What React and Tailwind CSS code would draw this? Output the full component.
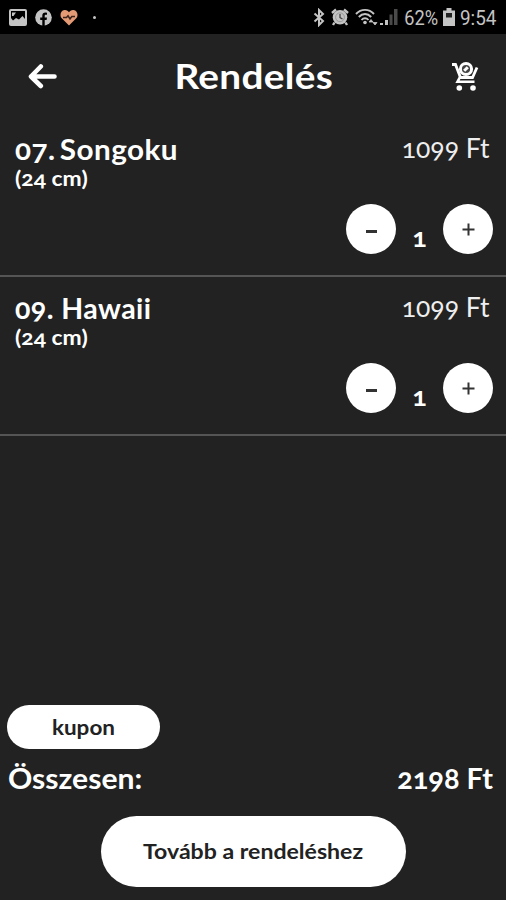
import React from "react";

const items = [
  { id: 1, name: "07. Songoku", size: "(24 cm)", price: "1099 Ft", count: 1, nameStyle: "scale-x-[1.06] [word-spacing:-3px]" },
  { id: 2, name: "09. Hawaii", size: "(24 cm)", price: "1099 Ft", count: 1, nameStyle: "scale-x-[1.02]" },
];

function StatusBar() {
  return (
    <div className="h-[34px] shrink-0 bg-black flex items-center justify-between pl-[9px] pr-[10px] text-[#c4c4c4] lining-nums">
      <div className="flex items-center">
        {/* Picture */}
        <svg className="w-[18px] h-[17px]" viewBox="0 0 18 17" fill="none">
          <rect x="1" y="1" width="16" height="15" rx="1" stroke="currentColor" strokeWidth="2" />
          <path d="M2 15V9L4 11.500L7 9L10 10.500L13.500 7L16 10V15Z" fill="currentColor" />
          <path d="M3 3.500H7L4.500 7H3Z" fill="currentColor" />
        </svg>
        {/* Facebook */}
        <svg className="w-[17px] h-[17px] ml-2" viewBox="0 0 17 17">
          <circle cx="8.500" cy="8.500" r="8.300" fill="currentColor" />
          <path d="M7.300 17V11H5.200V8.500H7.300V6.800C7.300 4.600 8.500 3.500 10.500 3.500L12 3.700V5.700H11C10 5.700 9.700 6.200 9.700 7V8.500H12L11.600 11H9.700V17Z" fill="#000" />
        </svg>
        {/* Heart rate */}
        <svg className="w-[18px] h-[17px] ml-2" viewBox="0 0 18 17">
          <path d="M9 16.500L1.500 9C-.5 6.500 .5 1.500 4.500 1C6.700 .8 8.200 2 9 3.200C9.800 2 11.300 .8 13.500 1C17.500 1.500 18.500 6.500 16.500 9Z" fill="#e59a76" />
          <path d="M3 8.500H6.500L8 6.800L10 10L11.800 7.500H15" fill="none" stroke="#3b241c" strokeWidth="1.500" />
        </svg>
        <span className="w-[3px] h-[3px] ml-[15px] rounded-full bg-current" />
      </div>

      <div className="flex items-center">
        {/* Bluetooth */}
        <svg className="w-[12px] h-[19px]" viewBox="0 0 12 19" fill="none" stroke="currentColor" strokeWidth="2">
          <path d="M1.500 5.500L10 13L6 17V2L10 6L1.500 13.500" />
        </svg>
        {/* Alarm */}
        <svg className="w-[18px] h-[18px] ml-[6px]" viewBox="0 0 18 18">
          <circle cx="9" cy="9.300" r="7.300" fill="currentColor" />
          <path d="M1 5L5 1.500M17 5L13 1.500M3.500 14.500L2 17M14.500 14.500L16 17" stroke="currentColor" strokeWidth="2.400" />
          <circle cx="9" cy="9.300" r="4.400" fill="none" stroke="#999" strokeWidth="1" />
          <path d="M9 6V9.700L11.500 11" fill="none" stroke="#444" strokeWidth="1.300" />
        </svg>
        {/* Wifi */}
        <svg className="w-[23px] h-[18px] ml-[6px]" viewBox="0 0 23 18" fill="none" stroke="currentColor" strokeWidth="1.900">
          <path d="M1 6C6 .5 14 .5 19 6M3.800 9C7.500 5 12.500 5 16.200 9M6.500 12C8.500 9.600 11.500 9.600 13.500 12" />
          <circle cx="10" cy="14.500" r="1.800" fill="currentColor" stroke="none" />
          <path d="M14 14L16 11.500L18 14ZM18 14.500L20 17L22 14.500Z" fill="currentColor" strokeWidth=".8" />
        </svg>
        {/* Signal */}
        <svg className="w-[18px] h-[18px] ml-[2px]" viewBox="0 0 18 18">
          <path d="M0 17V15H3V17ZM5 17V12H8V17Z" fill="currentColor" />
          <path d="M9.500 17V6.500H12.500V17ZM14 17V1H17.500V17Z" fill="#4a4a4a" />
        </svg>
        <span className="ml-[6px] w-[34px] whitespace-nowrap font-['Roboto'] text-[21px] leading-[24px] pt-[2px] origin-left scale-x-[0.87]">62%</span>
        {/* Battery */}
        <svg className="w-[12px] h-[18px] ml-[5px]" viewBox="0 0 12 18">
          <path d="M0 2.500H3.500V0H8.500V2.500H12V18H0Z" fill="currentColor" />
          <path d="M3 5H9V9.500H3Z" fill="#222" />
        </svg>
        <span className="ml-[5px] w-[36px] whitespace-nowrap font-['Roboto'] text-[21px] leading-[24px] pt-[2px] origin-left scale-x-[0.9]">9:54</span>
      </div>
    </div>
  );
}

function Header() {
  return (
    <header className="h-[84px] shrink-0 flex items-center justify-between pl-[28px] pr-[27px]">
      <svg className="w-[30px] h-[26px]" viewBox="0 0 30 26" fill="none" stroke="#fff" strokeWidth="4.600" strokeLinecap="round" strokeLinejoin="round">
        <path d="M26.500 13.500H3M12.800 3.500L3 13.500L12.800 23" />
      </svg>
      <h1 className="font-bold text-[35px] leading-[42px] tracking-[0.3px] pb-[2px] pr-px scale-x-[1.105]">Rendelés</h1>
      <svg className="w-[28px] h-[30px]" viewBox="0 0 28 30" fill="none" stroke="#fff">
        <path d="M1 3.500H4.500L9.500 16.500H21.500L26 6.500" strokeWidth="2.800" />
        <path d="M9 16L6.500 20.800H23.500" strokeWidth="2.600" />
        <circle cx="8.300" cy="27" r="2.800" fill="#fff" stroke="none" />
        <circle cx="22" cy="27" r="2.800" fill="#fff" stroke="none" />
        <circle cx="15" cy="8" r="5.600" fill="#444" strokeWidth="3" />
        <path d="M13.200 9.800L16.800 6.200" strokeWidth="3" />
      </svg>
    </header>
  );
}

function RoundButton({ label, children }) {
  return (
    <button aria-label={label} className="w-[50px] h-[50px] rounded-full bg-white flex items-center justify-center">
      {children}
    </button>
  );
}

function OrderItem({ item }) {
  return (
    <li className="h-[159px] border-b-2 border-[#555] flex flex-col justify-between pt-[14px] pb-[21px]">
      <div className="flex justify-between pl-[15px] pr-[16px]">
        <div>
          <h2 className={`font-bold text-[28px] leading-[34px] tracking-[0.4px] origin-left ${item.nameStyle}`}>{item.name}</h2>
          <p className="font-bold text-[21px] leading-[24px] origin-left scale-x-[1.09]">{item.size}</p>
        </div>
        <span className="text-[27px] leading-[32px] text-[#eee] origin-right scale-x-[0.98]">{item.price}</span>
      </div>
      <div className="flex justify-end items-center pr-[13px]">
        <RoundButton label="-">
          <span className="w-[11px] h-[3px] mt-[4px] bg-[#333]" />
        </RoundButton>
        <span className="w-[47px] text-center font-bold text-[27px] leading-[30px] pt-[16px]">{item.count}</span>
        <RoundButton label="+">
          <svg className="w-[13px] h-[13px]" viewBox="0 0 13 13" stroke="#333" strokeWidth="2">
            <path d="M.5 6.500H12.500M6.500 .5V12.500" />
          </svg>
        </RoundButton>
      </div>
    </li>
  );
}

export default function App() {
  return (
    <div className="w-[506px] h-[900px] overflow-hidden flex flex-col bg-[#222] text-white font-['Lato','Open_Sans',sans-serif] oldstyle-nums">
      <StatusBar />
      <Header />
      <ul>
        {items.map((item) => (
          <OrderItem key={item.id} item={item} />
        ))}
      </ul>

      <footer className="mt-auto flex flex-col pb-[13px]">
        <button className="ml-[7px] w-[153px] h-[44px] rounded-full bg-white text-[#222] font-bold text-[21px]">
          <span className="inline-block scale-x-[1.07]">kupon</span>
        </button>
        <div className="flex justify-between pl-[8px] pr-[13px] pt-[12px] pb-[21px] font-bold text-[28px] leading-[34px]">
          <span className="origin-left scale-x-[1.075]">Összesen:</span>
          <span className="origin-right scale-x-[1.03]">2198 Ft</span>
        </div>
        <button className="self-center w-[305px] h-[71px] rounded-full bg-white text-[#222] font-bold text-[21px] pb-[2px]">
          <span className="inline-block scale-x-[1.1]">Tovább a rendeléshez</span>
        </button>
      </footer>
    </div>
  );
}
